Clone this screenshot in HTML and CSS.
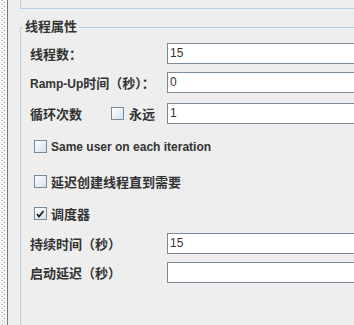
FILE: index.html
```html
<!DOCTYPE html>
<html>
<head>
    <link rel="stylesheet" href="styles.css">
</head>
<body>
    <div class="page">
        <div class="rail">
            <svg width="7" height="325">
                <defs>
                    <pattern id="dots" width="7" height="4" patternUnits="userSpaceOnUse">
                        <rect x="2" y="0" width="1" height="1" fill="#9aa6b2"/>
                        <rect x="4" y="2" width="1" height="1" fill="#7f97b3"/>
                    </pattern>
                </defs>
                <rect width="7" height="325" fill="url(#dots)"/>
            </svg>
        </div>

        <div class="main">
            <div class="top-panel"></div>

            <fieldset class="group">
                <legend>线程属性</legend>

                <div class="row row-first">
                    <span class="label">线程数：</span>
                    <div class="field">15</div>
                </div>

                <div class="row row-ramp">
                    <span class="label"><span class="latin">Ramp-Up</span>时间（秒）：</span>
                    <div class="field">0</div>
                </div>

                <div class="row row-loop">
                    <span class="label loop-label">
                        循环次数
                        <span class="check-inline">
                            <span class="checkbox"></span>
                            永远
                        </span>
                    </span>
                    <div class="field">1</div>
                </div>

                <div class="check-row check-same">
                    <span class="checkbox"></span>
                    <span class="latin">Same user on each iteration</span>
                </div>

                <div class="check-row check-delay">
                    <span class="checkbox"></span>
                    <span>延迟创建线程直到需要</span>
                </div>

                <div class="check-row check-sched">
                    <span class="checkbox checked">
                        <svg width="11" height="11" viewBox="0 0 11 11">
                            <path d="M2 6 L4 8.5 L8.5 3" fill="none" stroke="#222" stroke-width="1.8"/>
                        </svg>
                    </span>
                    <span>调度器</span>
                </div>

                <div class="row row-duration">
                    <span class="label">持续时间（秒）</span>
                    <div class="field">15</div>
                </div>

                <div class="row row-delay">
                    <span class="label">启动延迟（秒）</span>
                    <div class="field"></div>
                </div>
            </fieldset>
        </div>
    </div>
</body>
</html>
```

FILE: styles.css
```css
body {
    margin: 0;
    background-color: #eeeeee;
    font-family: "Liberation Sans", "Noto Sans CJK SC", sans-serif;
    font-size: 13px;
    color: #333333;
    overflow: hidden;
}

.page {
    display: flex;
    height: 325px;
}

.rail {
    width: 7px;
    flex-shrink: 0;
    background-color: #f6f6f6;
    border-right: 1px solid #7b7b7b;
}

.rail svg {
    display: block;
}

.main {
    margin-left: 12px;
    width: 420px;
    flex-shrink: 0;
}

.top-panel {
    height: 8px;
    border-left: 1px solid #b8cfe5;
    border-bottom: 1px solid #b8cfe5;
}

/* Titled group border */
.group {
    margin: 10px 0 0 0;
    padding: 8px 0 0 9px;
    border: 1px solid #b8cfe5;
    min-height: 400px;
}

.group legend {
    margin-left: -7px;
    padding: 0 2px;
    line-height: 16px;
    font-weight: bold;
    color: #333333;
}

.latin {
    font-size: 12px;
}

.row {
    display: flex;
    align-items: center;
    height: 21px;
    font-weight: bold;
}

.label {
    width: 137px;
    flex-shrink: 0;
}

.loop-label {
    display: flex;
    align-items: center;
}

.check-inline {
    display: flex;
    align-items: center;
    gap: 5px;
    margin-left: auto;
    margin-right: 12px;
}

.field {
    flex: 1;
    height: 21px;
    box-sizing: border-box;
    border: 1px solid #7a8a99;
    border-right: none;
    background-color: #ffffff;
    padding-left: 2px;
    font-size: 12px;
    font-weight: normal;
    line-height: 19px;
    color: #333333;
}

.row-ramp {
    margin-top: 8px;
}

.row-loop {
    margin-top: 10px;
}

.row-duration {
    margin-top: 9px;
}

.row-delay {
    margin-top: 8px;
}

.check-row {
    display: flex;
    align-items: center;
    gap: 4px;
    height: 21px;
    margin-left: 4px;
    font-weight: bold;
}

.check-same {
    margin-top: 12px;
}

.check-delay {
    margin-top: 14px;
}

.check-sched {
    margin-top: 11px;
}

.checkbox {
    display: flex;
    align-items: center;
    justify-content: center;
    width: 13px;
    height: 13px;
    box-sizing: border-box;
    border: 1px solid #7a8a99;
    background: linear-gradient(135deg, #ffffff 0%, #d4e0ec 100%);
    flex-shrink: 0;
}
```
